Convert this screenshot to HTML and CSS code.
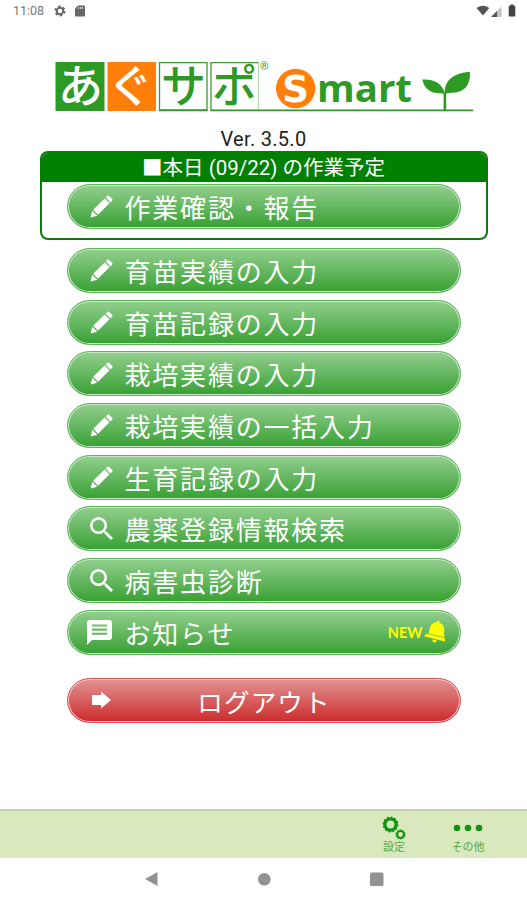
FILE: index.html
```html
<!DOCTYPE html>
<html lang="ja">
<head>
    <meta charset="UTF-8">
    <meta name="viewport" content="width=device-width, initial-scale=1.0">
    <title>あぐサポ Smart</title>
    <link rel="stylesheet" href="styles.css">
</head>
<body>
    <!-- アイコン定義 -->
    <svg class="defs" width="0" height="0">
        <symbol id="pencil" viewBox="0 0 24 24">
            <path d="M0.600 23.400l1.800-7 5.200 5.200zM3.300 15.300L15.300 3.700l5 5L8.400 20.600zM16.400 2.700l2-1.900q.7-.5 1.400.1l3.500 3.400q.6.700 0 1.400l-2 2z"/>
        </symbol>
        <symbol id="search" viewBox="3 3 17.500 17.500">
            <path d="M15.500 14h-.79l-.28-.27A6.470 6.470 0 0 0 16 9.500 6.500 6.500 0 1 0 9.500 16c1.610 0 3.090-.59 4.230-1.570l.27.28v.79l5 4.990L20.490 19l-4.990-5zm-6 0C7.010 14 5 11.990 5 9.500S7.010 5 9.500 5 14 7.010 14 9.500 11.990 14 9.500 14z"/>
        </symbol>
        <symbol id="chat" viewBox="2 2 20 20">
            <path d="M20 2H4c-1.100 0-2 .9-2 2v18l4-4h14c1.100 0 2-.9 2-2V4c0-1.100-.9-2-2-2zM6 5.500h12v1.700H6zm0 3.300h12v1.700H6zm0 3.300h12v1.700H6z" fill-rule="evenodd"/>
        </symbol>
    </svg>

    <header class="status">
        <span class="clock">11:08</span>
        <svg class="status-gear" width="12" height="12" viewBox="0 0 12 12">
            <circle cx="6" cy="6" r="4.600" fill="none" stroke="#666" stroke-width="1.800" stroke-dasharray="2.400 2.417"/>
            <circle cx="6" cy="6" r="3.200" fill="none" stroke="#666" stroke-width="2"/>
        </svg>
        <svg class="status-sd" width="10" height="12" viewBox="0 0 10 12">
            <path d="M3 0.500h6q1 0 1 1v9q0 1-1 1H1q-1 0-1-1V3.500z" fill="#666"/>
            <path d="M3.500 2v2M5.500 2v2M7.500 2v2" stroke="#ddd"/>
        </svg>
        <span class="spacer"></span>
        <svg width="40" height="14" viewBox="0 0 40 14">
            <path d="M0.500 4Q7-0.500 13.300 4L7 11.500z" fill="#555"/>
            <path d="M25.500 2.500V13H15z" fill="#c4c4c4"/>
            <path d="M21 7v6h-6z" fill="#555"/>
            <path d="M34.500 0.500h3v1.300h1.800V12.500h-6.600V1.800h1.800z" fill="#444"/>
        </svg>
    </header>

    <main class="main">
        <svg class="logo" width="420" height="76" viewBox="0 -10 420 76">
            <rect x="0.500" y="4" width="49" height="49" fill="#2e9a26"/>
            <rect x="52.500" y="4" width="48.500" height="49" fill="#ff7f0a"/>
            <g fill="none" stroke="#35a02d" stroke-width="1.300">
                <rect x="104.500" y="4.600" width="47.500" height="47.500"/>
                <path d="M156 52V4.600h47.500"/>
                <path d="M203.500 5v47" stroke="#b5ddb1"/>
            </g>
            <path d="M104 52.300h48.500M155.500 52.300h262.500" stroke="#2e9a26" stroke-width="1.800"/>
            <g class="logo-kana">
                <text x="25.500" y="44.500" fill="#fff">あ</text>
                <text x="75.500" y="44.500" fill="#fff">ぐ</text>
                <text x="128.500" y="44.500" fill="#2e9a26">サ</text>
                <text x="179.500" y="44.500" fill="#2e9a26">ポ</text>
            </g>
            <text class="logo-r" x="205" y="12" fill="#2e9a26">®</text>
            <circle cx="240.700" cy="30.500" r="19.700" fill="#ff7f0a"/>
            <text class="logo-s" x="240.700" y="43.500" fill="#fff">S</text>
            <text class="logo-mart" x="262" y="44" fill="#2e9a26" textLength="95" lengthAdjust="spacingAndGlyphs">mart</text>
            <path d="M388.600 52.500V35.800q-1-.6-2.600-.6Q370.500 36 367.300 21.500q17-1 22 12l.4 2q-1-19.500 25.300-21.800.8 21-19 21l-4.800.8v17z" fill="#2e9a26"/>
        </svg>
        <div class="version">Ver. 3.5.0</div>

        <section class="today">
            <h1 class="today-title">■本日 (09/22) の作業予定</h1>
            <a class="btn"><svg class="icon"><use href="#pencil"/></svg>作業確認・報告</a>
        </section>

        <nav class="menu">
            <a class="btn"><svg class="icon"><use href="#pencil"/></svg>育苗実績の入力</a>
            <a class="btn"><svg class="icon"><use href="#pencil"/></svg>育苗記録の入力</a>
            <a class="btn"><svg class="icon"><use href="#pencil"/></svg>栽培実績の入力</a>
            <a class="btn"><svg class="icon"><use href="#pencil"/></svg>栽培実績の一括入力</a>
            <a class="btn"><svg class="icon"><use href="#pencil"/></svg>生育記録の入力</a>
            <a class="btn"><svg class="icon"><use href="#search"/></svg>農薬登録情報検索</a>
            <a class="btn"><svg class="icon"><use href="#search"/></svg>病害虫診断</a>
            <a class="btn"><svg class="icon icon-chat"><use href="#chat"/></svg>お知らせ
                <span class="new">NEW
                    <svg width="22" height="24" viewBox="0 0 22 24" fill="#ff0">
                        <path d="M4.300 13.500C6 11 4.500 6.500 9 3.400q1.800-1.100 3.600-1.200.4-2 2-1.600 1.400.4 1 2.100c5.500 2.300 4.800 6.300 4.400 10.800l.6 3.700z"/>
                        <path d="M2.500 13.800l18.200 4.300.3 3.300L0 16.200zM8.300 19.400l4.600 1.100q-.8 2.300-2.800 1.800-2-.5-1.800-2.900z"/>
                    </svg>
                </span>
            </a>
        </nav>

        <a class="btn btn-logout">
            <svg class="icon icon-arrow" viewBox="0 0 19 18"><path d="M1 4h8V0.500L19 9l-10 8.500V14H1q-1 0-1-1V5q0-1 1-1z"/></svg>
            <span class="logout-text">ログアウト</span>
        </a>
    </main>

    <footer class="toolbar">
        <a class="tool">
            <svg width="24" height="24" viewBox="0 0 24 24" fill="none" stroke="#129412">
                <circle cx="8.500" cy="8.500" r="5.600" stroke-width="3.400"/>
                <circle cx="8.500" cy="8.500" r="7.400" stroke-width="1.200" stroke-dasharray="1.900 1.975"/>
                <circle cx="18.500" cy="18.500" r="3.500" stroke-width="2.200"/>
                <circle cx="18.500" cy="18.500" r="4.700" stroke-width="0.800" stroke-dasharray="1.500 1.450"/>
            </svg>
            設定
        </a>
        <a class="tool">
            <svg width="30" height="24" viewBox="0 0 30 24" fill="#129412">
                <circle cx="4" cy="12" r="3.300"/><circle cx="15" cy="12" r="3.300"/><circle cx="26" cy="12" r="3.300"/>
            </svg>
            その他
        </a>
    </footer>

    <div class="navbar">
        <svg width="14" height="16" viewBox="0 0 14 16"><path d="M13.500 1v14L1 8z"/></svg>
        <svg width="14" height="16" viewBox="0 0 14 16"><circle cx="7.300" cy="8.300" r="6.300"/></svg>
        <svg width="14" height="16" viewBox="0 0 14 16"><rect y="1.500" width="13.500" height="13.500" rx="1.500"/></svg>
    </div>
</body>
</html>
```
FILE: styles.css
```css
* {
    box-sizing: border-box;
}

body {
    display: flex;
    flex-direction: column;
    height: 900px;
    margin: 0;
    overflow: hidden;
    background-color: #fff;
    font-family: Roboto, "Noto Sans CJK JP", sans-serif;
}

svg {
    display: block;
    flex: none;
}

.defs {
    position: absolute;
}

/* ステータスバー */
.status {
    display: flex;
    align-items: center;
    height: 24px;
    padding: 0 11px 3px 13px;
    color: #777;
    font-size: 12.5px;
}

.clock {
    width: 41px;
}

.status-sd {
    margin-left: 9px;
}

.spacer {
    flex: 1;
}

.main {
    display: flex;
    flex: 1;
    flex-direction: column;
    align-items: center;
}

/* ロゴ */
.logo {
    margin: 24px 0 -10px 3px;
}

.logo-kana {
    font: 500 45px "Noto Sans CJK JP", sans-serif;
    text-anchor: middle;
}

.logo-r {
    font: 11px Roboto, sans-serif;
}

.logo-s {
    font: bold 37px "DejaVu Sans", sans-serif;
    text-anchor: middle;
}

.logo-mart {
    font: bold 37px "Open Sans", sans-serif;
}

.version {
    height: 37px;
    padding-top: 13px;
    color: #222;
    font-size: 20px;
    line-height: 24px;
    letter-spacing: 0.3px;
}

/* 本日の作業予定 */
.today {
    display: flex;
    flex-direction: column;
    align-items: center;
    width: 448px;
    height: 89px;
    border: 2px solid #0b7a0b;
    border-radius: 8px;
    overflow: hidden;
}

.today-title {
    width: 100%;
    height: 29px;
    margin: 0 0 2px;
    padding-top: 1px;
    background-color: #008000;
    color: #fff;
    font-size: 20.5px;
    font-weight: 400;
    line-height: 29px;
    text-align: center;
}

/* ボタン */
.btn {
    display: flex;
    align-items: center;
    flex: none;
    width: 394px;
    height: 45px;
    padding: 0 14px 0 22px;
    border: 1px solid #5cb558;
    border-radius: 23px;
    background: linear-gradient(#93cf8f, #37a032);
    box-shadow: inset 0 0 0 1px #c9e8c7;
    color: #fff;
    font-size: 26px;
    letter-spacing: 1.8px;
    white-space: nowrap;
}

.icon {
    width: 23px;
    height: 23px;
    margin-right: 12px;
    fill: #fff;
}

.icon-chat {
    width: 25px;
    height: 25px;
    margin: 0 13px 0 -3px;
}

.menu {
    display: flex;
    flex-direction: column;
    gap: 6.7px;
    margin-top: 8px;
}

.new {
    display: flex;
    align-items: center;
    gap: 1px;
    margin-left: auto;
    color: #ff0;
    font: bold 14.5px Lato, sans-serif;
    letter-spacing: 0;
}

.btn-logout {
    margin-top: 23px;
    border-color: #d95555;
    background: linear-gradient(#e39393, #cc2a2a);
    box-shadow: inset 0 0 0 1px #f3caca;
}

.icon-arrow {
    width: 19px;
    height: 18px;
    margin: 0 0 0 2px;
}

.logout-text {
    flex: 1;
    padding-right: 28px;
    font-size: 25.5px;
    letter-spacing: 1.2px;
    text-align: center;
}

/* 下部ツールバー */
.toolbar {
    display: flex;
    justify-content: flex-end;
    gap: 40px;
    height: 49px;
    padding: 5px 42px 0 0;
    border-top: 2px solid #c3d2a8;
    background-color: #dae8bd;
}

.tool {
    display: flex;
    flex-direction: column;
    align-items: center;
    width: 34px;
    color: #52ab4c;
    font-size: 11px;
    line-height: 15px;
    white-space: nowrap;
}

.navbar {
    display: flex;
    justify-content: center;
    gap: 99px;
    height: 42px;
    padding-top: 13px;
    fill: #929292;
}
```
